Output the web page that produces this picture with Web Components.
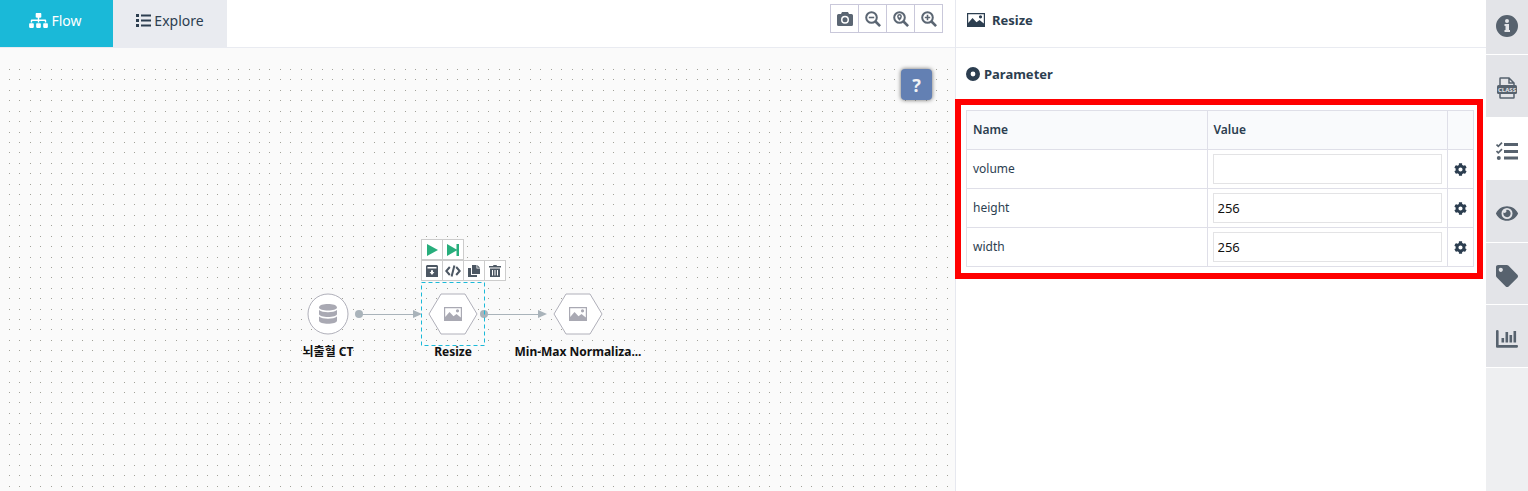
<!DOCTYPE html>
<html lang="en">
<head>
<meta charset="utf-8">
<title>Flow editor</title>
<style>
  html, body { margin: 0; height: 100%; }
  body { font-family: "Noto Sans", "Noto Sans CJK KR", sans-serif; font-size: 12px; color: #2c3e50; background: #fff; }
</style>
</head>
<body>
<flow-app></flow-app>

<script>
const ICONS = {
  sitemap: ['0 0 640 512', '<path d="M128 352H32c-17.67 0-32 14.33-32 32v96c0 17.67 14.33 32 32 32h96c17.67 0 32-14.33 32-32v-96c0-17.67-14.33-32-32-32zm-24-80h192v48h48v-48h192v48h48v-57.59c0-21.17-17.23-38.41-38.41-38.41H344v-64h40c17.67 0 32-14.33 32-32V32c0-17.67-14.33-32-32-32H256c-17.67 0-32 14.33-32 32v96c0 17.67 14.33 32 32 32h40v64H94.41C73.23 224 56 241.23 56 262.41V320h48v-48zm264 80h-96c-17.67 0-32 14.33-32 32v96c0 17.67 14.33 32 32 32h96c17.67 0 32-14.33 32-32v-96c0-17.67-14.33-32-32-32zm240 0h-96c-17.67 0-32 14.33-32 32v96c0 17.67 14.33 32 32 32h96c17.67 0 32-14.33 32-32v-96c0-17.67-14.33-32-32-32z"/>'],
  list: ['0 0 15 13', '<path d="M0 0h3v3H0zM0 5h3v3H0zM0 10h3v3H0zM5 .5h10v2H5zM5 5.5h10v2H5zM5 10.500h10v2H5z"/>'],
  camera: ['0 0 16 14', '<path fill-rule="evenodd" d="M1.500 2H4l1-2h6l1 2h2.500Q16 2 16 3.500v9q0 1.500-1.500 1.500h-13Q0 14 0 12.500v-9Q0 2 1.500 2zM8 3.700a4 4 0 1 0 0 8a4 4 0 0 0 0-8zM8 5.200a2.500 2.500 0 1 1 0 5a2.500 2.500 0 0 1 0-5z"/>'],
  zoomOut: ['0 0 16 16', '<g fill="none" stroke="currentColor" stroke-width="2"><circle cx="6.500" cy="6.500" r="5.300"/><path d="M10.500 10.500l4.600 4.600" stroke-width="2.600"/><path d="M3.800 6.500h5.400" stroke-width="1.600"/></g>'],
  zoomFit: ['0 0 16 16', '<g fill="none" stroke="currentColor" stroke-width="2"><circle cx="6.500" cy="6.500" r="5.300"/><path d="M10.500 10.500l4.600 4.600" stroke-width="2.600"/></g><path fill-rule="evenodd" d="M6.500 3a2.400 2.400 0 0 1 2.400 2.400Q8.900 7 6.500 9.800Q4.100 7 4.100 5.400A2.400 2.400 0 0 1 6.500 3zm0 1.600a.9.9 0 1 0 0 1.800a.9.9 0 0 0 0-1.800z"/>'],
  zoomIn: ['0 0 16 16', '<g fill="none" stroke="currentColor" stroke-width="2"><circle cx="6.500" cy="6.500" r="5.300"/><path d="M10.500 10.500l4.600 4.600" stroke-width="2.600"/><path d="M3.800 6.500h5.400M6.500 3.800v5.400" stroke-width="1.600"/></g>'],
  image: ['0 0 18 14', '<path fill-rule="evenodd" d="M0 0h18v14H0zM1.200 1.200v8.800L5.500 5l4 4.200L12.500 7l4.300 3.500V1.200zM13.500 2.200a1.600 1.600 0 1 1 0 3.200a1.600 1.600 0 0 1 0-3.200z"/>'],
  target: ['0 0 14 14', '<path fill-rule="evenodd" d="M7 0a7 7 0 1 1 0 14A7 7 0 0 1 7 0zm0 4.600a2.400 2.400 0 1 0 0 4.800a2.400 2.400 0 0 0 0-4.800z"/>'],
  cog: ['0 0 512 512', '<path d="M487.4 315.700l-42.600-24.600c4.300-23.200 4.300-47 0-70.200l42.600-24.600c4.900-2.800 7.100-8.600 5.500-14-11.100-35.600-30-67.800-54.700-94.600-3.800-4.100-10-5.100-14.800-2.300L380.800 110c-17.900-15.400-38.500-27.300-60.800-35.100V25.800c0-5.600-3.900-10.500-9.400-11.700-36.700-8.200-74.300-7.800-109.200 0-5.500 1.200-9.400 6.100-9.400 11.700V75c-22.200 7.900-42.800 19.800-60.800 35.100L88.700 85.500c-4.900-2.800-11-1.900-14.800 2.300-24.700 26.700-43.600 58.900-54.700 94.600-1.700 5.400.6 11.200 5.500 14L67.300 221c-4.300 23.200-4.300 47 0 70.200l-42.600 24.600c-4.900 2.800-7.100 8.600-5.500 14 11.100 35.600 30 67.800 54.700 94.600 3.800 4.100 10 5.100 14.800 2.300l42.600-24.600c17.900 15.400 38.500 27.300 60.800 35.100v49.200c0 5.600 3.900 10.500 9.400 11.700 36.700 8.200 74.300 7.800 109.200 0 5.500-1.200 9.400-6.100 9.400-11.700v-49.200c22.200-7.900 42.800-19.800 60.800-35.100l42.600 24.600c4.900 2.800 11 1.900 14.800-2.300 24.700-26.700 43.600-58.900 54.700-94.600 1.500-5.500-.7-11.300-5.600-14.100zM256 336c-44.100 0-80-35.900-80-80s35.900-80 80-80 80 35.900 80 80-35.900 80-80 80z"/>'],
  info: ['0 0 22 22', '<path fill-rule="evenodd" d="M11 0a11 11 0 1 1 0 22a11 11 0 0 1 0-22zm0 4a2 2 0 1 0 0 4a2 2 0 0 0 0-4zM8.500 9v2h1v4h-1v2h5.500v-2h-1V9z"/>'],
  classFile: ['0 0 20 22', '<path fill="none" stroke="currentColor" stroke-width="1.500" d="M3 8V1.500Q3 1 3.500 1H12l5 5v2M12 1v5h5M3 16v4.500q0 .5.500.5h13q.5 0 .5-.5V16"/><rect y="8" width="20" height="9" rx="1.500"/><text x="10" y="14.800" text-anchor="middle" font-family="Noto Sans, sans-serif" font-size="6" font-weight="700" fill="#e3e4e8">CLASS</text>'],
  tasks: ['0 0 22 18', '<path d="M8 1h14v3H8zM8 8h14v3H8zM8 14.500h14v3H8z"/><circle cx="2.800" cy="16" r="2"/><path fill="none" stroke="currentColor" stroke-width="1.700" d="M.5 2.500l1.800 1.800L6 .7M.5 9l1.800 1.800L6 7.200"/>'],
  eye: ['0 0 576 384', '<path fill-rule="evenodd" d="M572.520 177.400C518.290 71.590 410.930 0 288 0S57.680 71.640 3.480 177.410a32.350 32.350 0 0 0 0 29.190C57.710 312.410 165.070 384 288 384s230.320-71.640 284.520-177.410a32.350 32.350 0 0 0 0-29.190zM288 336a144 144 0 1 1 144-144 143.930 143.930 0 0 1-144 144zm0-240a95.310 95.310 0 0 0-25.310 3.790 47.850 47.850 0 0 1-66.900 66.900A95.780 95.780 0 1 0 288 96z"/>'],
  tag: ['0 0 512 512', '<path d="M0 252.118V48C0 21.490 21.490 0 48 0h204.118a48 48 0 0 1 33.941 14.059l211.882 211.882c18.745 18.745 18.745 49.137 0 67.882L293.823 497.941c-18.745 18.745-49.137 18.745-67.882 0L14.059 286.059A48 48 0 0 1 0 252.118zM112 64c-26.510 0-48 21.490-48 48s21.490 48 48 48 48-21.490 48-48-21.490-48-48-48z"/>'],
  chart: ['0 0 22 18', '<path d="M0 1q0-1 1.300-1T2.600 1v14H21q1 0 1 1.300t-1 1.400H1q-1 0-1-1zM5.500 8h2.600v4.500H5.500zM9.500 2h2.600v10.500H9.500zM13.500 5h2.600v7.500h-2.600zM17.500 1h2.600v11.500h-2.600z"/>'],
  play: ['0 0 12 12', '<path d="M1 0l11 6L1 12z"/>'],
  step: ['0 0 12 12', '<path d="M0 0l9.500 5.500V0H12v12H9.500V6.500L0 12z"/>'],
  save: ['0 0 12 12', '<path fill-rule="evenodd" d="M1 0h10l1 1v10.500q0 .5-.5.5H.5Q0 12 0 11.500V1zM1.500 2v1.500h9V2zM5 5.200v1.900H3.600L6 9.900l2.400-2.800H7V5.200z"/>'],
  code: ['0 0 16 12', '<path fill="none" stroke="currentColor" stroke-width="2" d="M4.800 2L1.300 6l3.500 4M11.200 2l3.500 4-3.500 4M9.400.5L6.600 11.500"/>'],
  copy: ['0 0 12 12', '<path d="M4 0h4.500v3.500H12V9H4zM9.300 0L12 2.700H9.300zM0 3h3v7h6v2H0z"/>'],
  trash: ['0 0 12 12', '<path fill-rule="evenodd" d="M0 1h4l.5-1h3L8 1h4v1.600H0zM1 3.400h10V12H1zM3 5v5.500h1V5zM5.500 5v5.500h1V5zM8 5v5.500h1V5z"/>'],
  database: ['0 0 18 20', '<path d="M0 3.500C0-1.100 18-1.100 18 3.500C18 7.500 0 7.500 0 3.500zM0 6q3 2.200 9 2.200T18 6v4c0 4-18 4-18 0zM0 12.500q3 2.200 9 2.200t9-2.200v4c0 4.300-18 4.300-18 0z"/>']
};

const define = (name, html, setup) => {
  const template = document.createElement('template');
  template.innerHTML = html;
  customElements.define(name, class extends HTMLElement {
    constructor() {
      super();
      this.attachShadow({ mode: 'open' }).append(template.content.cloneNode(true));
    }
    connectedCallback() { if (setup) setup(this, this.shadowRoot); }
  });
};

define('ui-icon', `<style>
  :host { display: inline-flex; flex: none; }
  svg { display: block; width: var(--w, 16px); height: var(--h, 16px); fill: currentColor; }
</style><svg aria-hidden="true"></svg>`, (el, root) => {
  const [box, body] = ICONS[el.getAttribute('name')];
  const svg = root.querySelector('svg');
  svg.setAttribute('viewBox', box);
  svg.innerHTML = body;
});

define('icon-button', `<style>
  :host { display: block; box-sizing: border-box; }
  button { display: flex; align-items: center; justify-content: center; box-sizing: border-box; width: 100%; height: 100%;
    margin: 0; padding: var(--pad, 0); font: inherit; color: inherit; background: var(--bg, transparent); border: var(--bd, 0); cursor: pointer; }
</style><button type="button"><slot></slot></button>`, (el, root) => {
  root.querySelector('button').setAttribute('aria-label', el.getAttribute('label'));
});

define('top-bar', `<style>
  :host { display: flex; align-items: stretch; height: 47px; border-bottom: 1px solid #e9ebf1; background: #fff; }
  button { display: flex; align-items: center; justify-content: center; gap: 3px; margin: 0; padding: 0 0 6px; border: 0;
    width: 114px; font: 14px/20px "Noto Sans", sans-serif; color: #2c3e50; background: #e9ebf0; }
  button.on { width: 113px; padding-right: 2px; color: #fff; background: #1ab9d8; }
  .map { --w: 19px; --h: 15px; }
  .list { --w: 15px; --h: 13px; }
  .tools { display: flex; height: 27px; margin: 4px 12px 0 auto; border: 1px solid #c9c8da; color: #5b6673; }
  .tools icon-button { width: 27px; --pad: 0 0 0 1px; }
  .tools icon-button + icon-button { width: 28px; border-left: 1px solid #c9c8da; --pad: 0; }
  .cam { --w: 16px; --h: 14px; }
</style>
<button type="button" class="on"><ui-icon class="map" name="sitemap"></ui-icon>Flow</button>
<button type="button"><ui-icon class="list" name="list"></ui-icon>Explore</button>
<div class="tools">
  <icon-button label="Capture"><ui-icon class="cam" name="camera"></ui-icon></icon-button>
  <icon-button label="Zoom out"><ui-icon name="zoomOut"></ui-icon></icon-button>
  <icon-button label="Zoom to fit"><ui-icon name="zoomFit"></ui-icon></icon-button>
  <icon-button label="Zoom in"><ui-icon name="zoomIn"></ui-icon></icon-button>
</div>`);

define('flow-node', `<style>
  :host { position: absolute; display: flex; flex-direction: column; align-items: center; width: 160px; }
  .shape { display: grid; place-items: center; width: 50px; height: 42px; color: #a9a9b3; }
  .shape > * { grid-area: 1 / 1; }
  .outline { fill: #fff; stroke: #b0b0ba; }
  ui-icon { --w: 18px; --h: 14px; z-index: 1; }
  :host([kind="data"]) ui-icon { --h: 20px; }
  .label { margin-top: 8px; font: 700 12px/18px "Noto Sans", "Noto Sans CJK KR", sans-serif; color: #111; white-space: nowrap; }
</style>
<div class="shape"><svg class="outline" width="50" height="42"></svg><ui-icon name="image"></ui-icon></div>
<div class="label"><slot></slot></div>`, (el, root) => {
  const data = el.getAttribute('kind') === 'data';
  root.querySelector('svg').innerHTML = data
    ? '<circle cx="25" cy="21" r="20"/>'
    : '<path d="M1 21L13 1h24l12 20-12 20H13z"/>';
  if (data) root.querySelector('ui-icon').outerHTML = '<ui-icon name="database"></ui-icon>';
});

define('node-tools', `<style>
  :host { position: absolute; display: block; color: #4c5763; --w: 12px; --h: 12px; }
  .row { display: flex; }
  icon-button { width: 22px; height: 21px; margin-right: -1px; --bg: #fff; --bd: 1px solid #ccc; }
  .run { color: #27ae7c; }
  .code { --w: 16px; }
</style>
<div class="row run">
  <icon-button label="Run"><ui-icon name="play"></ui-icon></icon-button>
  <icon-button label="Run to here"><ui-icon name="step"></ui-icon></icon-button>
</div>
<div class="row">
  <icon-button label="Save"><ui-icon name="save"></ui-icon></icon-button>
  <icon-button label="Code"><ui-icon class="code" name="code"></ui-icon></icon-button>
  <icon-button label="Copy"><ui-icon name="copy"></ui-icon></icon-button>
  <icon-button label="Delete"><ui-icon name="trash"></ui-icon></icon-button>
</div>`);

define('flow-canvas', `<style>
  :host { display: block; position: relative; flex: 1; overflow: hidden; background: #fafafa; }
  .grid { position: absolute; left: 8px; top: 20px; width: calc(100% - 13px); height: calc(100% - 20px); }
  .edges { position: absolute; left: 0; top: 0; fill: #a9b3ba; stroke: none; }
  .edges path { stroke: #a9b3ba; }
  .edges .sel { fill: none; stroke: #1ab9d8; stroke-dasharray: 4 3; }
  .n1 { left: 248px; top: 245px; }
  .n2 { left: 373px; top: 245px; }
  .n3 { left: 498px; top: 245px; }
  node-tools { left: 421px; top: 191px; }
  .help { position: absolute; right: 23px; top: 21px; width: 31px; height: 31px; border-radius: 4px;
    background: #6380b3; box-shadow: 0 0 4px #666; color: #f2f2f4; font: 700 18px/24px "Noto Sans", sans-serif; }
</style>
<svg class="grid"><defs><pattern id="dots" width="125" height="125" patternUnits="userSpaceOnUse"></pattern></defs><rect width="100%" height="100%" fill="url(#dots)"/></svg>
<flow-node class="n1" kind="data">뇌출혈 CT</flow-node>
<flow-node class="n2">Resize</flow-node>
<flow-node class="n3">Min-Max Normaliza...</flow-node>
<svg class="edges" width="660" height="320">
  <circle cx="359" cy="266" r="4"/><path d="M359 266.500H414M484 266.500H539"/>
  <circle cx="484" cy="266" r="4"/>
  <polygon points="413,262 422,266 413,270"/><polygon points="538,262 547,266 538,270"/>
  <rect class="sel" x="421.500" y="234.500" width="63" height="63"/>
</svg>
<node-tools></node-tools>
<icon-button class="help" label="Help">?</icon-button>`, (el, root) => {
  let dots = '';
  for (let r = 0; r < 12; r++)
    for (let c = 0; c < 12; c++)
      dots += '<rect x="' + (1 + Math.round(c * 125 / 12)) + '" y="' + (1 + Math.round(r * 125 / 12)) + '" width="1" height="1" fill="#a2a299"/>';
  root.querySelector('pattern').innerHTML = dots;
});

define('panel-title', `<style>
  :host { display: flex; align-items: center; font: 700 13px/20px "Noto Sans", sans-serif; color: #2c3e50; }
</style><slot></slot>`);

define('param-table', `<style>
  :host { display: block; }
  table { width: 100%; border-collapse: collapse; table-layout: fixed; font-size: 12px; line-height: 18px; }
  th, td { padding: 4px 5px; border: 1px solid #dfdfe8; text-align: left; font-weight: 400; }
  td:first-child, th { padding-left: 6px; }
  th { height: 30px; font-weight: 600; background: #f9fafc; }
  .act { width: 14px; }
  td.act { --w: 13px; --h: 13px; }
  icon-button { height: 20px; }
  input { display: block; box-sizing: border-box; width: 100%; height: 30px; margin: 0; padding: 0 4px; border: 1px solid #e3e3e5;
    font: 13px/18px "Noto Sans", sans-serif; color: #111; background: #fff; outline: 0; }
</style>
<table>
  <thead><tr><th scope="col">Name</th><th scope="col">Value</th><th class="act"></th></tr></thead>
  <tbody></tbody>
</table>`, (el, root) => {
  root.querySelector('tbody').innerHTML = [['volume', ''], ['height', '256'], ['width', '256']].map(([name, value]) => `
    <tr><td><label for="${name}">${name}</label></td>
      <td><input id="${name}" type="text" value="${value}"></td>
      <td class="act"><icon-button label="Settings for ${name}"><ui-icon name="cog"></ui-icon></icon-button></td></tr>`).join('');
});

define('param-panel', `<style>
  :host { display: block; border-left: 1px solid #e6e8ef; background: #fff; }
  .head { height: 40px; padding: 0 0 7px 11px; gap: 7px; border-bottom: 1px solid #e9ebf1; --w: 18px; --h: 14px; }
  .sub { padding: 16px 0 15px 10px; gap: 4px; --w: 14px; --h: 14px; }
  .frame { margin: 0 3px 0 -1px; padding: 5px 3px 6px 5px; border: 6px solid #f00; }
</style>
<panel-title class="head"><ui-icon name="image"></ui-icon>Resize</panel-title>
<panel-title class="sub"><ui-icon name="target"></ui-icon>Parameter</panel-title>
<div class="frame"><param-table></param-table></div>`);

define('side-rail', `<style>
  :host { display: block; background: #eeeff1; color: #57626e; }
  nav { display: grid; grid-template-rows: 55px repeat(5, 1fr); height: 368px; --w: 22px; --h: 22px; }
  icon-button { --bg: #e3e4e8; --pad: 5px 0 0; border-bottom: 1px solid #fff; }
  icon-button:first-child { --pad: 0 0 2px; }
  .on { --bg: #fff; }
  .cls { --w: 20px; }
  .low { --h: 18px; }
  .eye { --h: 15px; }
</style>
<nav>
  <icon-button label="Information"><ui-icon name="info"></ui-icon></icon-button>
  <icon-button label="Class"><ui-icon class="cls" name="classFile"></ui-icon></icon-button>
  <icon-button label="Parameters" class="on"><ui-icon class="low" name="tasks"></ui-icon></icon-button>
  <icon-button label="Preview"><ui-icon class="eye" name="eye"></ui-icon></icon-button>
  <icon-button label="Tags"><ui-icon name="tag"></ui-icon></icon-button>
  <icon-button label="Statistics"><ui-icon class="low" name="chart"></ui-icon></icon-button>
</nav>`);

define('flow-app', `<style>
  :host { display: grid; grid-template-columns: minmax(0, 1fr) 531px 42px; height: 100%; }
  main { display: flex; flex-direction: column; min-width: 0; }
</style>
<main><top-bar></top-bar><flow-canvas></flow-canvas></main>
<param-panel></param-panel>
<side-rail></side-rail>`);
</script>
</body>
</html>
